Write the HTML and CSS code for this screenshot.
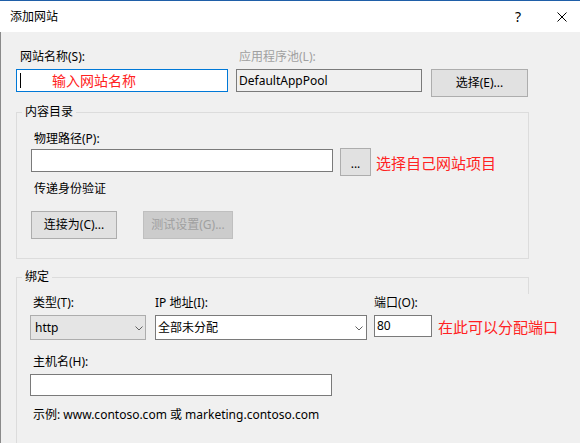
FILE: index.html
```html
<!DOCTYPE html>
<html lang="zh-CN">
<head>
  <meta charset="UTF-8" />
  <meta name="viewport" content="width=device-width, initial-scale=1.0"/>
  <title>添加网站</title>
  <link rel="stylesheet" href="styles.css">
</head>
<body>
  <div class="titlebar">
    <span class="title">添加网站</span>
    <span class="help">?</span>
    <svg class="close" width="10" height="10" viewBox="0 0 10 10">
      <path d="M0.5 0.5 L9.5 9.5 M9.5 0.5 L0.5 9.5" stroke="#000" stroke-width="1" fill="none"/>
    </svg>
  </div>

  <div class="dialog">
    <div class="top-row">
      <div class="col-name">
        <div class="label">网站名称(S):</div>
        <div class="field focus">
          <span class="caret"></span>
          <span class="note note-name">输入网站名称</span>
        </div>
      </div>
      <div class="col-pool">
        <div class="label disabled">应用程序池(L):</div>
        <div class="field readonly">DefaultAppPool</div>
      </div>
      <div class="btn btn-select">选择(E)...</div>
    </div>

    <fieldset class="group">
      <legend>内容目录</legend>
      <div class="group-body">
        <div class="label">物理路径(P):</div>
        <div class="path-row">
          <div class="field path"></div>
          <div class="btn btn-browse">...</div>
          <span class="note">选择自己网站项目</span>
        </div>
        <div class="label pass">传递身份验证</div>
        <div class="btn-row">
          <div class="btn btn-connect">连接为(C)...</div>
          <div class="btn btn-test disabled">测试设置(G)...</div>
        </div>
      </div>
    </fieldset>

    <fieldset class="group group-bind">
      <legend>绑定</legend>
      <div class="group-body bind-body">
        <div class="bind-row">
          <div class="col-type">
            <div class="label">类型(T):</div>
            <div class="select combo">
              <span>http</span>
              <svg width="8" height="5" viewBox="0 0 8 5"><polyline points="0.5,0.5 4,4 7.5,0.5" fill="none" stroke="#606060" stroke-width="1"/></svg>
            </div>
          </div>
          <div class="col-ip">
            <div class="label flush">IP 地址(I):</div>
            <div class="select ip">
              <span>全部未分配</span>
              <svg width="8" height="5" viewBox="0 0 8 5"><polyline points="0.5,0.5 4,4 7.5,0.5" fill="none" stroke="#606060" stroke-width="1"/></svg>
            </div>
          </div>
          <div class="col-port">
            <div class="label flush">端口(O):</div>
            <div class="port-row">
              <div class="field port">80</div>
              <span class="note">在此可以分配端口</span>
            </div>
          </div>
        </div>
        <div class="label host-label">主机名(H):</div>
        <div class="field host"></div>
        <div class="label example">示例: www.contoso.com 或 marketing.contoso.com</div>
      </div>
    </fieldset>
  </div>
</body>
</html>
```

FILE: styles.css
```css
html, body {
  margin: 0;
}
body {
  width: 580px;
  height: 443px;
  overflow: hidden;
  font-family: "Noto Sans", "Noto Sans CJK SC", sans-serif;
  font-size: 12px;
  line-height: 16px;
  color: #000;
  background-color: #f0f0f0;
}
.titlebar {
  height: 31px;
  border-top: 1px solid #1f5fa8;
  background-color: #fff;
  display: flex;
  align-items: center;
  padding-left: 10px;
}
.help {
  margin-left: auto;
  margin-right: 36px;
  font-size: 14px;
}
.close {
  margin-right: 13px;
}
.dialog {
  border-left: 1px solid #8a8a8a;
  padding: 17px 0 0 15px;
}
.label {
  padding-left: 3px;
  height: 16px;
  white-space: nowrap;
}
.label.flush { padding-left: 0; }
.disabled { color: #a0a0a0; }

.field {
  box-sizing: border-box;
  height: 23px;
  border: 1px solid #7a7a7a;
  background-color: #fff;
  display: flex;
  align-items: center;
  padding-left: 2px;
}
.note {
  color: #f22;
  font-size: 15px;
  line-height: 20px;
  white-space: nowrap;
}

/* top row */
.top-row {
  display: flex;
  align-items: flex-start;
}
.col-name { width: 212px; flex-shrink: 0; }
.col-name .label { padding-left: 4px; }
.col-name .field, .col-pool .field { margin-top: 4px; }
.field.focus { border-color: #0078d7; }
.caret {
  width: 1px;
  height: 15px;
  background-color: #000;
  margin-left: 1px;
}
.note-name {
  font-size: 14px;
  margin-left: 31px;
}
.col-pool {
  width: 186px;
  flex-shrink: 0;
  margin-left: 8px;
}
.field.readonly {
  background-color: #f0f0f0;
  padding-left: 2px;
}

.btn {
  box-sizing: border-box;
  height: 28px;
  background-color: #e1e1e1;
  border: 1px solid #adadad;
  display: flex;
  align-items: center;
  justify-content: center;
  white-space: nowrap;
  flex-shrink: 0;
}
.btn.disabled {
  background-color: #cccccc;
  border-color: #bfbfbf;
  color: #a0a0a0;
}
.btn-select {
  width: 97px;
  margin-left: 9px;
  margin-top: 20px;
}

/* groups */
.group {
  box-sizing: border-box;
  width: 513px;
  margin: 7px 0 0 0;
  padding: 0;
  border: 1px solid #dcdcdc;
  min-width: 0;
}
.group legend {
  margin-left: 5px;
  padding: 0 3px;
  line-height: 16px;
}
.group-body {
  padding: 11px 0 19px 14px;
}
.path-row {
  display: flex;
  align-items: flex-start;
  margin-top: 1px;
}
.field.path {
  width: 302px;
  flex-shrink: 0;
  margin-top: 1px;
}
.btn-browse {
  width: 31px;
  margin-left: 7px;
  padding-top: 3px;
}
.path-row .note {
  margin-left: 5px;
  margin-top: 5px;
}
.pass { margin-top: 5px; }
.btn-row {
  display: flex;
  margin-top: 14px;
}
.btn-connect { width: 86px; }
.btn-test {
  width: 90px;
  margin-left: 26px;
}

.group-bind {
  margin-top: 10px;
  border-right: none;
  background: linear-gradient(#dcdcdc, #dcdcdc) right top / 1px 16px no-repeat;
}
.bind-body {
  padding: 10px 0 40px 13px;
}
.bind-row {
  display: flex;
  align-items: flex-start;
}
.bind-row > div { flex-shrink: 0; }
.select {
  box-sizing: border-box;
  height: 25px;
  margin-top: 4px;
  display: flex;
  align-items: center;
  justify-content: space-between;
}
.select svg { margin-top: 1px; }
.col-type { width: 116px; }
.select.combo {
  background-color: #e5e5e5;
  border: 1px solid #adadad;
  padding: 0 2px 0 4px;
}
.col-ip {
  width: 212px;
  margin-left: 9px;
}
.select.ip {
  background-color: #fff;
  border: 1px solid #7a7a7a;
  padding: 0 3px 0 2px;
}
.col-port { margin-left: 7px; }
.port-row {
  display: flex;
  align-items: flex-start;
  margin-top: 4px;
}
.field.port {
  width: 58px;
  height: 22px;
  flex-shrink: 0;
}
.port-row .note {
  margin-left: 6px;
  margin-top: 2px;
}
.host-label { margin-top: 14px; }
.field.host {
  width: 302px;
  height: 22px;
  margin-top: 4px;
}
.example { margin-top: 11px; }
```
